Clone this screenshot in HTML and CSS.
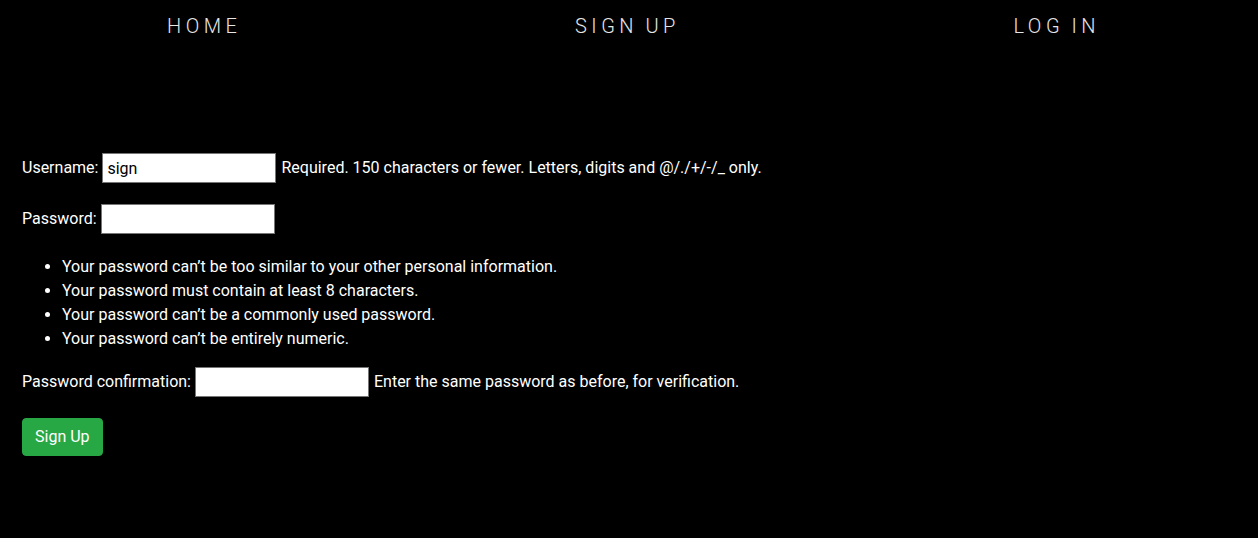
FILE: index.html
```html
<!DOCTYPE html>
<html lang="en">
<head>
<meta charset="utf-8">
<title>Sign Up</title>
<link rel="stylesheet" href="styles.css">
</head>
<body>
<nav class="nav">
  <a class="nav-link" href="#">HOME</a>
  <a class="nav-link" href="#">SIGN UP</a>
  <a class="nav-link" href="#">LOG IN</a>
</nav>
<main class="content">
  <form class="signup-form">
    <p class="row">
      <label class="label" for="id_username">Username:</label>
      <input class="field" type="text" id="id_username" value="sign">
      <span class="help">Required. 150 characters or fewer. Letters, digits and @/./+/-/_ only.</span>
    </p>
    <p class="row">
      <label class="label" for="id_password1">Password:</label>
      <input class="field" type="password" id="id_password1">
    </p>
    <ul class="rules">
      <li>Your password can’t be too similar to your other personal information.</li>
      <li>Your password must contain at least 8 characters.</li>
      <li>Your password can’t be a commonly used password.</li>
      <li>Your password can’t be entirely numeric.</li>
    </ul>
    <p class="row">
      <label class="label" for="id_password2">Password confirmation:</label>
      <input class="field" type="password" id="id_password2">
      <span class="help">Enter the same password as before, for verification.</span>
    </p>
    <button class="btn" type="submit">Sign Up</button>
  </form>
</main>
</body>
</html>
```
FILE: styles.css
```css
* { box-sizing: border-box; }

html, body {
  margin: 0;
  padding: 0;
  background: #000;
}

body {
  font-family: Roboto, "Liberation Sans", sans-serif;
  font-size: 16px;
  line-height: 1.5;
  color: #fff;
}

.nav {
  display: flex;
  justify-content: space-between;
  align-items: center;
  height: 51px;
  padding: 0 158px 0 167px;
}

.nav-link {
  color: #e6e6e6;
  text-decoration: none;
  font-weight: 300;
  font-size: 20px;
  letter-spacing: 4.5px;
  word-spacing: -2px;
}

.content {
  padding: 100px 22px 0;
}

.signup-form {
  margin: 0;
}

.row {
  display: flex;
  align-items: center;
  gap: 4px;
  height: 34.5px;
  margin: 0 0 16px;
}

.field {
  width: 174px;
  height: 30px;
  margin: 0;
  padding: 1px 4px;
  border: 1px solid #767676;
  background: #fff;
  color: #000;
  font-family: Roboto, "Liberation Sans", sans-serif;
  font-size: 16px;
}

.help {
  margin-left: 1px;
}

.rules {
  margin: 19px 0 14px;
  padding-left: 40px;
}

.btn {
  display: inline-block;
  margin-top: 2px;
  padding: 6px 12px;
  border: 1px solid #28a745;
  border-radius: 4px;
  background: #28a745;
  color: #fff;
  font-family: Roboto, "Liberation Sans", sans-serif;
  font-size: 16px;
  line-height: 1.5;
}
```
